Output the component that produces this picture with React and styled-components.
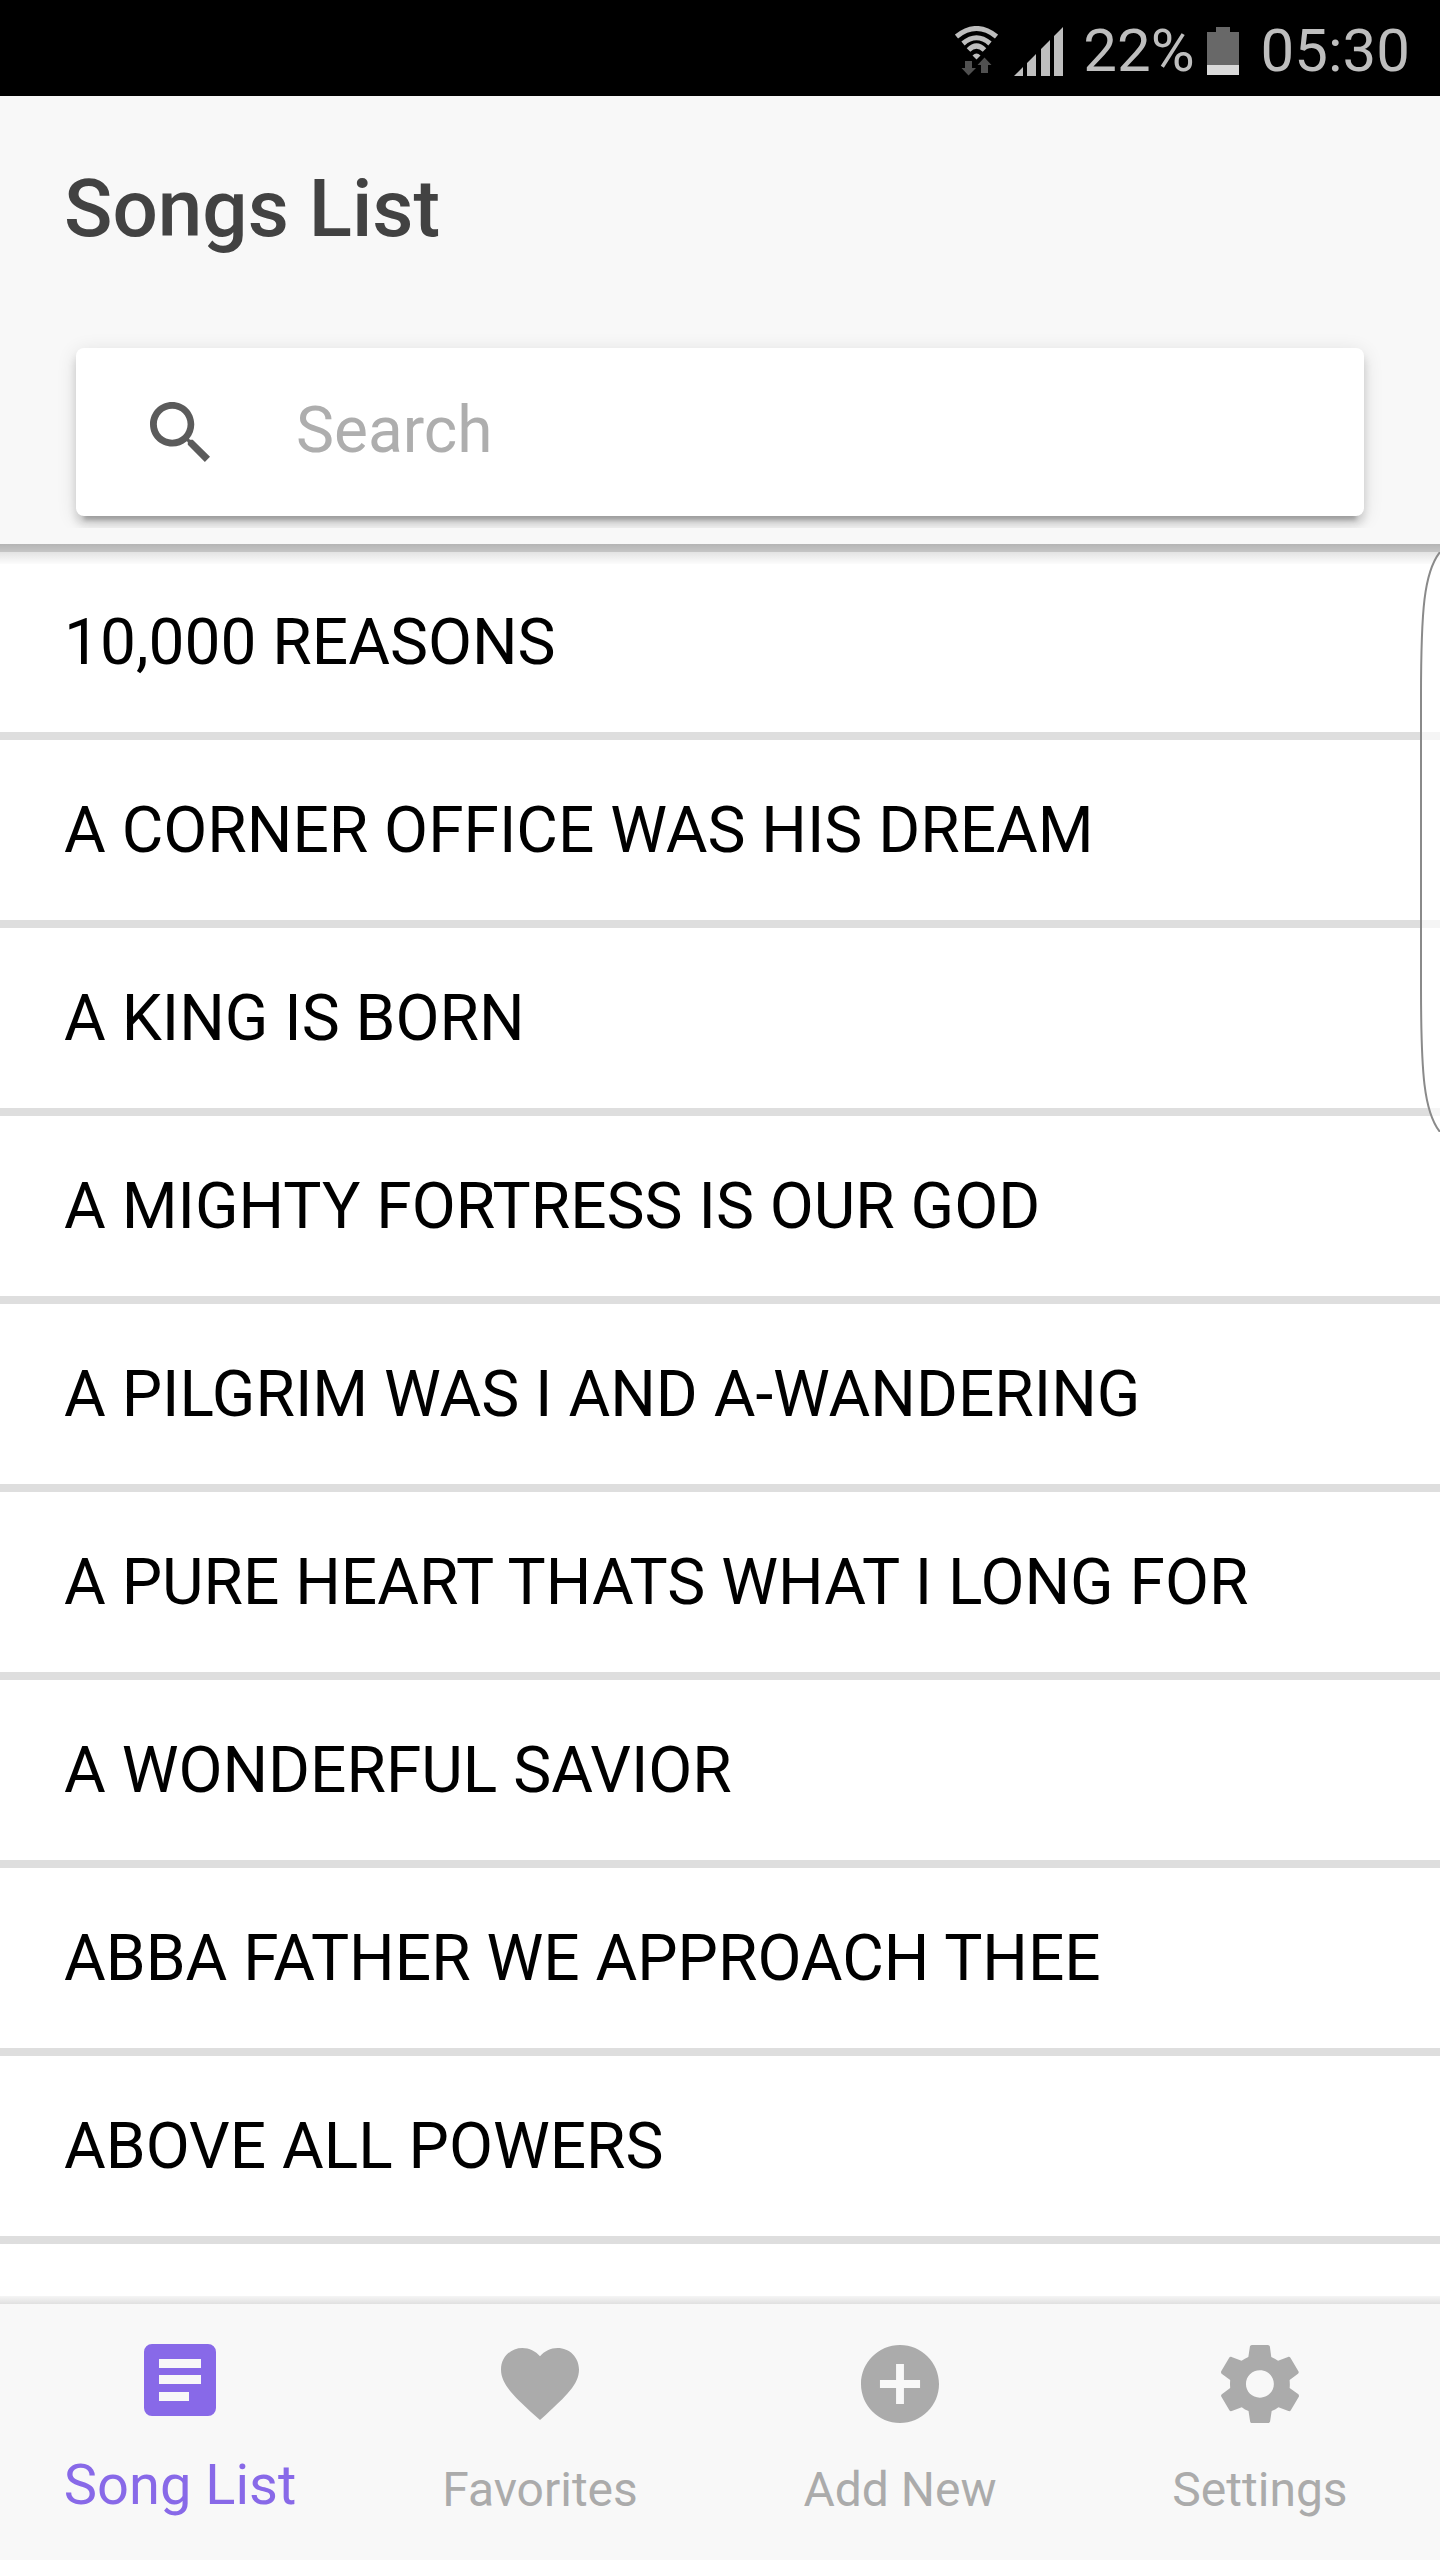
import React, { useState } from 'react';
import styled, { createGlobalStyle } from 'styled-components';
import { IoMdSearch, IoMdHeart, IoMdAddCircle, IoMdSettings } from 'react-icons/io';

const GlobalStyle = createGlobalStyle`
  * {
    box-sizing: border-box;
  }

  body {
    margin: 0;
    background: #fff;
    font-family: Roboto, 'Noto Sans', sans-serif;
  }
`;

const Screen = styled.div`
  position: relative;
  min-height: 100vh;
  display: flex;
  flex-direction: column;
`;

const StatusBar = styled.div`
  height: 96px;
  padding: 6px 30px 0 0;
  display: flex;
  align-items: center;
  justify-content: flex-end;
  background: #000;
  color: #bebebe;
  font-size: 60px;
  line-height: 72px;
`;

const StatusIcons = styled.div`
  display: flex;
  align-items: center;
  gap: 16px;
  margin-right: 20px;
`;

const Battery = styled.svg`
  margin: 0 22px 0 12px;
`;

const Header = styled.header`
  position: relative;
  padding-bottom: 16px;
  background: #f8f8f8;

  &::after {
    content: '';
    position: absolute;
    top: 100%;
    left: 0;
    right: 0;
    height: 20px;
    background: linear-gradient(rgba(0, 0, 0, 0.19), rgba(0, 0, 0, 0.1) 45%, rgba(0, 0, 0, 0.01));
  }
`;

const Title = styled.h1`
  margin: 0;
  padding: 2px 64px 0;
  color: #424242;
  font-size: 80px;
  font-weight: 500;
  line-height: 222px;
`;

const SearchWrap = styled.div`
  padding: 28px 76px 12px;
  overflow: hidden;
`;

const SearchBox = styled.label`
  height: 168px;
  padding: 0 64px;
  display: flex;
  align-items: center;
  gap: 76px;
  border-radius: 8px;
  background: #fff;
  color: #5b5b5b;
  box-shadow:
    0 8px 8px rgba(0, 0, 0, 0.14),
    0 12px 4px -8px rgba(0, 0, 0, 0.2),
    0 4px 20px rgba(0, 0, 0, 0.12);
`;

const SearchInput = styled.input`
  flex: 1;
  min-width: 0;
  padding: 0 0 2px;
  border: 0;
  outline: none;
  background: transparent;
  color: #141414;
  font-family: inherit;
  font-size: 64px;
  line-height: 76px;

  &::placeholder {
    color: #aeaeae;
    opacity: 1;
  }
`;

const SongList = styled.ul`
  flex: 1;
  margin: 0;
  padding: 0;
  border-top: 8px solid #dedede;
  list-style: none;
`;

const SongItem = styled.li`
  border-bottom: 8px solid #dedede;
`;

const SongButton = styled.button`
  display: block;
  width: 100%;
  padding: 53px 64px 51px;
  border: 0;
  background: transparent;
  color: #000;
  font-family: inherit;
  font-size: 64px;
  line-height: 76px;
  text-align: left;
`;

// edge panel handle, floats above the list
const EdgeHandle = styled.svg`
  position: absolute;
  top: 552px;
  right: 0;
`;

const TabBar = styled.nav`
  position: relative;
  height: 256px;
  display: grid;
  grid-template-columns: repeat(4, 1fr);
  background: #f8f8f8;

  &::before {
    content: '';
    position: absolute;
    bottom: 100%;
    left: 0;
    right: 0;
    height: 8px;
    background: linear-gradient(rgba(0, 0, 0, 0.04), rgba(0, 0, 0, 0.12));
  }
`;

const Tab = styled.button`
  display: flex;
  flex-direction: column;
  align-items: center;
  gap: ${({ $active }) => ($active ? '24px' : '30px')};
  padding: ${({ $active }) => ($active ? '28px' : '32px')} 0 0;
  border: 0;
  background: transparent;
  color: ${({ $active }) => ($active ? '#8869e8' : '#ababab')};
  font-family: inherit;
  font-size: ${({ $active }) => ($active ? '56px' : '48px')};
  line-height: ${({ $active }) => ($active ? '66px' : '56px')};
`;

const SongListIcon = ({ size }) => (
  <svg width={size} height={size} viewBox="0 0 96 96" fill="currentColor" aria-hidden="true">
    <path
      fillRule="evenodd"
      d="M20 12h56a8 8 0 0 1 8 8v56a8 8 0 0 1-8 8H20a8 8 0 0 1-8-8V20a8 8 0 0 1 8-8zM27 27v9h42v-9zM27 43v9h42v-9zM27 60v9h30v-9z"
    />
  </svg>
);

const WifiIcon = () => (
  <svg width="43" height="50" viewBox="0 0 43 50" aria-hidden="true">
    <g fill="none" stroke="#bebebe" strokeWidth="5">
      <path d="M1.5 10.5Q21.5 -5.5 41.5 10.5" />
      <path d="M8 17.5Q21.5 6 35 17.5" />
      <path d="M13.5 24Q21.5 16 29.5 24" />
    </g>
    <path d="M17.5 29.5Q21.5 25.5 25.5 29.5L21.5 33.5z" fill="#bebebe" />
    <path d="M10 35h7v7h4L13.500 49.500 6.500 42h3.500z" fill="#505050" />
    <path d="M26 47h7v-8h3.500L29.500 31.500 22.500 39H26z" fill="#505050" />
  </svg>
);

const SignalIcon = () => (
  <svg width="49" height="49" viewBox="0 0 49 49" fill="#bebebe" aria-hidden="true">
    <path d="M0 49l9-9v9zM13 49V36l9-9v22zM27 49V22l9-9v36zM40 49V9l9-9v49z" />
  </svg>
);

const tabs = [
  { label: 'Song List', Icon: SongListIcon },
  { label: 'Favorites', Icon: IoMdHeart },
  { label: 'Add New', Icon: IoMdAddCircle },
  { label: 'Settings', Icon: IoMdSettings },
];

const songs = [
  '10,000 REASONS',
  'A CORNER OFFICE WAS HIS DREAM',
  'A KING IS BORN',
  'A MIGHTY FORTRESS IS OUR GOD',
  'A PILGRIM WAS I AND A-WANDERING',
  'A PURE HEART THATS WHAT I LONG FOR',
  'A WONDERFUL SAVIOR',
  'ABBA FATHER WE APPROACH THEE',
  'ABOVE ALL POWERS',
];

const App = () => {
  const [activeTab, setActiveTab] = useState('Song List');
  const [query, setQuery] = useState('');

  const visibleSongs = songs.filter((song) => song.includes(query.toUpperCase()));

  return (
    <>
      <GlobalStyle />
      <Screen>
        <StatusBar>
          <StatusIcons>
            <WifiIcon />
            <SignalIcon />
          </StatusIcons>
          <span>22%</span>
          <Battery width="32" height="48" viewBox="0 0 32 48" aria-hidden="true">
            <path d="M9 0h14v5h9v33H0V5h9z" fill="#686868" />
            <path d="M0 38h32v10H0z" fill="#d9d9d9" />
          </Battery>
          <span>05:30</span>
        </StatusBar>

        <Header>
          <Title>Songs List</Title>
          <SearchWrap>
            <SearchBox>
              <IoMdSearch size={80} aria-hidden="true" />
              <SearchInput
                type="text"
                placeholder="Search"
                aria-label="Search"
                value={query}
                onChange={(e) => setQuery(e.target.value)}
              />
            </SearchBox>
          </SearchWrap>
        </Header>

        <SongList>
          {visibleSongs.map((song) => (
            <SongItem key={song}>
              <SongButton type="button">{song}</SongButton>
            </SongItem>
          ))}
        </SongList>

        <TabBar>
          {tabs.map(({ label, Icon }) => (
            <Tab
              key={label}
              type="button"
              $active={label === activeTab}
              onClick={() => setActiveTab(label)}
            >
              <Icon size={96} />
              <span>{label}</span>
            </Tab>
          ))}
        </TabBar>

        <EdgeHandle width="20" height="580" viewBox="0 0 20 580" aria-hidden="true">
          <path
            d="M20 0C4 20 1 58 1 145V435C1 522 4 560 20 580"
            fill="#fff"
            fillOpacity="0.7"
            stroke="#8a8a8a"
            strokeWidth="2"
          />
        </EdgeHandle>
      </Screen>
    </>
  );
};

export default App;
